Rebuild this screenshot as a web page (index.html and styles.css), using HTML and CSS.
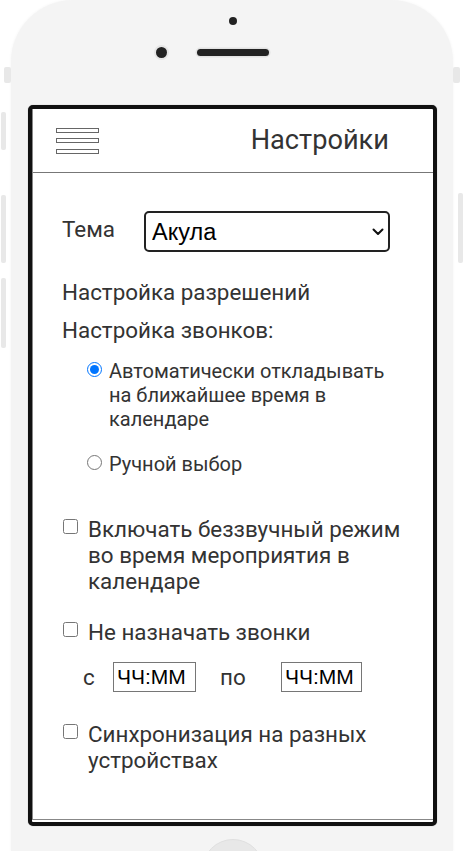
FILE: index.html
```html
<!DOCTYPE html>
<html lang="ru">
<head>
<meta charset="utf-8">
<title>Настройки</title>
<link rel="stylesheet" href="styles.css">
</head>
<body>
<div class="phone">
  <span class="side side-l1"></span>
  <span class="side side-l2"></span>
  <span class="side side-l3"></span>
  <span class="side side-l4"></span>
  <span class="side side-r1"></span>
  <span class="side side-r2"></span>
  <div class="top">
    <span class="sensor"></span>
    <div class="cam-row">
      <span class="camera"></span>
      <span class="speaker"></span>
      <span></span>
    </div>
  </div>
  <div class="screen">
    <div class="inner">
      <header class="bar">
        <div class="burger"><span></span><span></span><span></span></div>
        <h1 class="title">Настройки</h1>
      </header>
      <main class="content">
        <div class="theme-row">
          <label class="theme-label" for="theme">Тема</label>
          <div class="select-wrap">
            <select id="theme" class="select"><option>Акула</option></select>
            <svg class="chev" width="12" height="8" viewBox="0 0 12 8"><path d="M1.5 1.5 L6 6 L10.5 1.5" fill="none" stroke="#111" stroke-width="2" stroke-linecap="round" stroke-linejoin="round"/></svg>
          </div>
        </div>
        <p class="line perm">Настройка разрешений</p>
        <p class="line calls">Настройка звонков:</p>
        <div class="radios">
          <label class="radio r1"><input type="radio" name="calls" checked><span>Автоматически откладывать на ближайшее время в календаре</span></label>
          <label class="radio r2"><input type="radio" name="calls"><span>Ручной выбор</span></label>
        </div>
        <label class="check c1"><input type="checkbox"><span>Включать беззвучный режим во время мероприятия в календаре</span></label>
        <label class="check c2"><input type="checkbox"><span>Не назначать звонки</span></label>
        <div class="time-row">
          <span class="t-from">с</span>
          <input class="time" type="text" value="ЧЧ:ММ">
          <span class="t-to">по</span>
          <input class="time" type="text" value="ЧЧ:ММ">
        </div>
        <label class="check c3"><input type="checkbox"><span>Синхронизация на разных устройствах</span></label>
      </main>
    </div>
  </div>
  <div class="bottom"><div class="home"></div></div>
</div>
</body>
</html>
```
FILE: styles.css
```css
* { box-sizing: border-box; }
html, body { margin: 0; padding: 0; background: #fff; }
body { overflow: hidden; height: 851px; font-family: Roboto, "Noto Sans", sans-serif; color: #333; }

.phone {
  position: relative;
  margin-left: 11px;
  width: 442px;
  height: 851px;
  background: #f4f4f4;
  border-radius: 62px 62px 0 0;
  box-shadow: 0 0 3px rgba(0,0,0,0.05);
  padding: 0 16px 0 17px;
}

.side { position: absolute; background: #e8e8e8; border-radius: 2px; }
.side-l1 { left: -7px; top: 67px; width: 7px; height: 16px; }
.side-l2 { left: -10px; top: 112px; width: 5px; height: 38px; }
.side-l3 { left: -10px; top: 195px; width: 5px; height: 68px; }
.side-l4 { left: -10px; top: 278px; width: 5px; height: 70px; }
.side-r1 { right: -7px; top: 67px; width: 7px; height: 16px; }
.side-r2 { right: -10px; top: 193px; width: 5px; height: 70px; }

.top { height: 105px; display: flex; flex-direction: column; align-items: center; padding-top: 17px; }
.sensor { width: 8px; height: 8px; border-radius: 50%; background: #222; }
.cam-row { width: 100%; display: grid; grid-template-columns: 1fr auto 1fr; align-items: center; margin-top: 22px; }
.camera { justify-self: end; margin-right: 30px; width: 11px; height: 11px; border-radius: 50%; background: #222; box-shadow: 0 0 0 2px #e6e6e6; }
.speaker { width: 72px; height: 7px; border-radius: 4px; background: #222; box-shadow: 0 0 0 1.5px #e2e2e2; }

.screen {
  height: 721px;
  border: 4px solid #111;
  border-radius: 5px;
  background: #fff;
  box-shadow: 0 0 1px rgba(0,0,0,0.4);
}
.inner {
  height: 711px;
  border-left: 1px solid #888;
  border-bottom: 1px solid #888;
  display: flex;
  flex-direction: column;
}

.bar {
  height: 64px;
  border-bottom: 1px solid #777;
  display: flex;
  align-items: center;
  justify-content: space-between;
  padding: 0 44px 0 23px;
}
.burger { display: flex; flex-direction: column; gap: 5.5px; }
.burger span { display: block; width: 43px; height: 5px; border: 1px solid #666; background: #fff; }
.title { margin: 0; font-weight: 400; font-size: 27.2px; color: #333; line-height: 1; }

.content { padding: 38px 28px 0 29px; }

.theme-row { display: flex; align-items: center; }
.theme-label { width: 82px; font-size: 22.4px; line-height: 26.25px; margin-top: -5px; }
.select-wrap { position: relative; width: 246px; height: 41px; }
.select {
  appearance: none;
  -webkit-appearance: none;
  width: 100%;
  height: 100%;
  border: 2px solid #222;
  border-radius: 5px;
  background: #fff;
  font-family: "Liberation Sans", Arial, sans-serif;
  font-size: 23.5px;
  color: #000;
  padding: 0 24px 0 6px;
}
.chev { position: absolute; right: 6px; top: 17px; pointer-events: none; }

.line { margin: 0; font-size: 22.4px; line-height: 26.25px; }
.perm { margin-top: 27px; }
.calls { margin-top: 12px; }

.radios { margin-top: 15px; padding-left: 25px; display: flex; flex-direction: column; gap: 21px; }
.radio { display: flex; align-items: flex-start; font-size: 20px; line-height: 24px; }
.radio input { width: 15px; height: 15px; margin: 3px 7px 0 0; flex: none; }

.check { display: flex; align-items: flex-start; font-size: 22.4px; line-height: 26.25px; }
.check input { width: 15px; height: 15px; margin: 3px 10px 0 1px; flex: none; }
.c1 { margin-top: 40px; }
.c2 { margin-top: 25px; }
.c3 { margin-top: 29px; }

.time-row { display: flex; align-items: center; margin-top: 16.5px; padding-left: 21px; font-size: 22.4px; line-height: 26.25px; }
.t-from { width: 30px; }
.t-to { margin-left: 24px; width: 61px; }
.time {
  width: 83px;
  height: 30px;
  border: 1px solid #767676;
  border-radius: 0;
  padding: 0 3px;
  font-family: "Liberation Sans", Arial, sans-serif;
  font-size: 21px;
  color: #000;
  background: #fff;
}
.time + .t-to + .time { width: 81px; }

.bottom { height: 25px; overflow: hidden; display: flex; justify-content: center; padding-top: 13px; }
.home {
  flex: none;
  width: 62px;
  height: 62px;
  border-radius: 50%;
  background: #e8e8e8;
  border: 1px solid #e0e0e0;
}
```
